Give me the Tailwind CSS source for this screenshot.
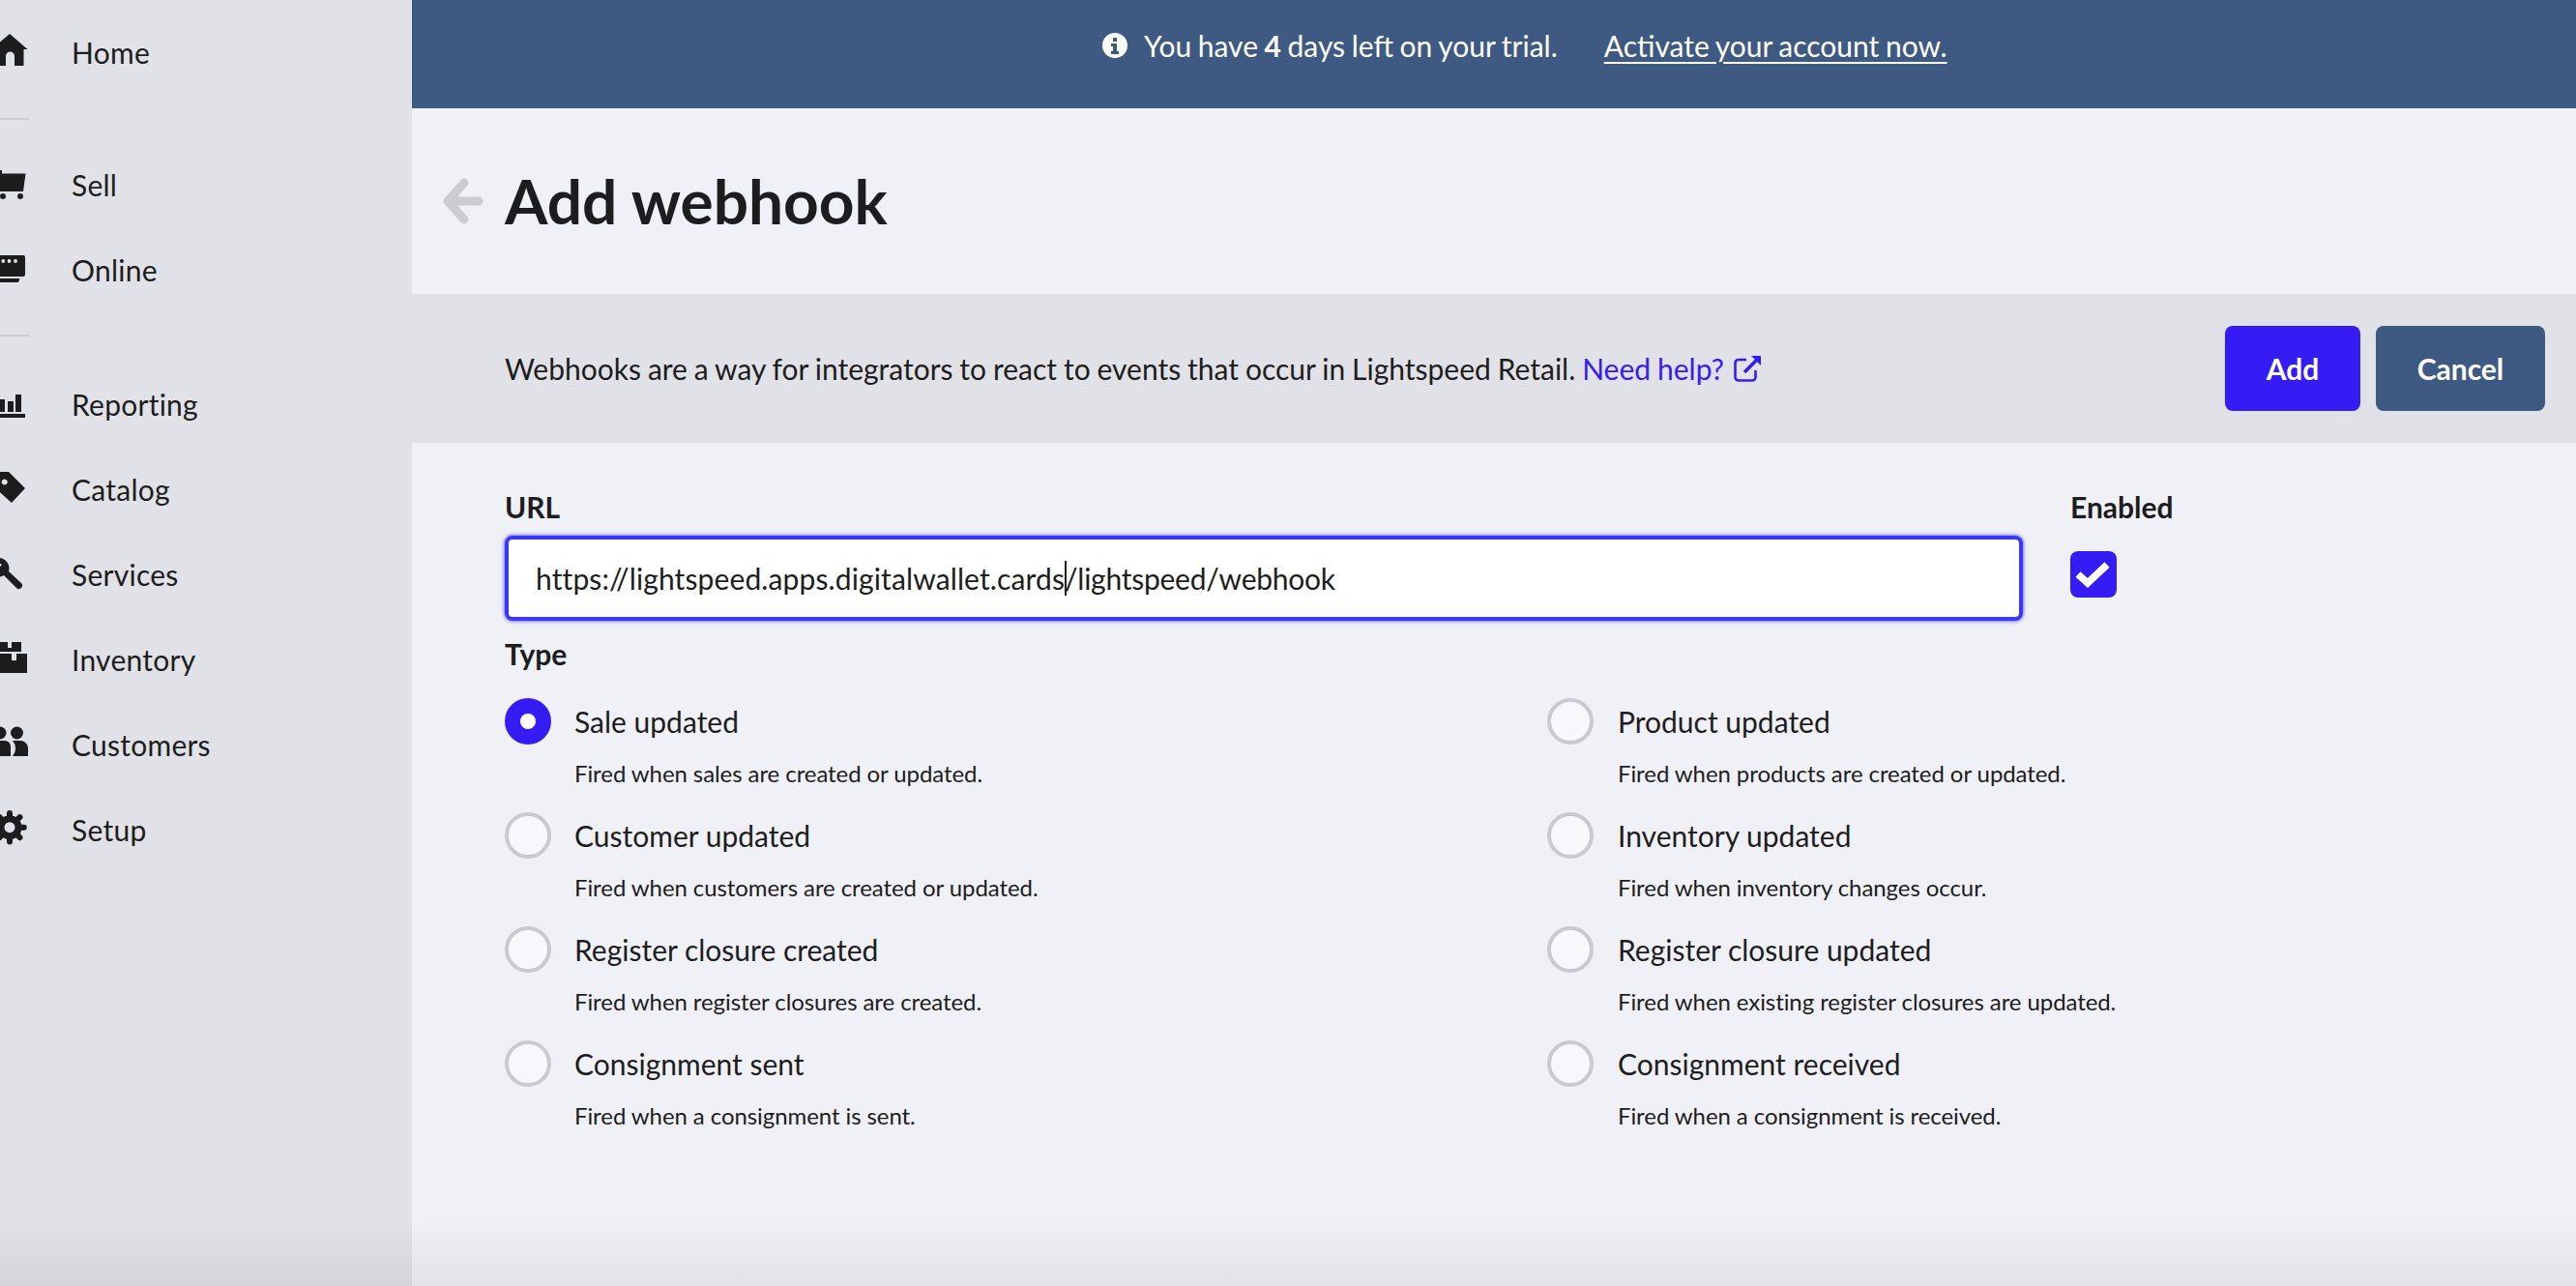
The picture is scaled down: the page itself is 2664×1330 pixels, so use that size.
<!DOCTYPE html>
<html lang="en">
<head>
    <meta charset="UTF-8">
    <meta name="viewport" content="width=device-width, initial-scale=1.0">
    <title>Add webhook</title>
    <script src="https://cdn.jsdelivr.net/npm/@tailwindcss/browser@4"></script>
</head>
<body class="bg-[#f0f1f7] font-['Lato',sans-serif] text-[#1d1d20]">
    <div class="relative flex h-[1330px] w-[2664px] overflow-hidden">

        <!-- sidebar, scrolled a little so the icons are cut at the left -->
        <nav class="w-[426px] shrink-0 bg-[#e1e2e7] pt-[10px] text-[30px] tracking-[0.25px]">
            <a class="flex h-[88px] items-center">
                <svg class="w-[30px] h-[40px] mr-[44px] shrink-0 fill-[#1d1d20]" viewBox="0 0 30 40"><path d="M10 1L28.500 17H24.500V34H15V24a4.500 4.500 0 0 0-9 0V34H-5V17H-9Z"/></svg>
                <span>Home</span>
            </a>
            <div class="mt-[24px] mb-[23px] h-[2px] w-[30px] bg-[#cbccd1]"></div>
            <a class="flex h-[88px] items-center">
                <svg class="w-[30px] h-[40px] mr-[44px] shrink-0 fill-[#1d1d20]" viewBox="0 0 30 40"><path d="M-2 5H2V8.500H26.500L24 27H-2Z"/><circle cx="3" cy="32" r="3"/><circle cx="21" cy="32" r="3"/></svg>
                <span>Sell</span>
            </a>
            <a class="flex h-[88px] items-center">
                <svg class="w-[30px] h-[40px] mr-[44px] shrink-0 fill-[#1d1d20]" viewBox="0 0 30 40"><path d="M-2 5H24a2 2 0 0 1 2 2V25a2 2 0 0 1-2 2H-2Z"/><path d="M-2 29H20.500L19 33H-2Z"/><g class="fill-[#e1e2e7]"><circle cx="3.300" cy="11" r="1.900"/><circle cx="9.500" cy="11" r="1.900"/><circle cx="16" cy="11" r="1.900"/></g></svg>
                <span>Online</span>
            </a>
            <div class="mt-[23px] mb-[26px] h-[2px] w-[30px] bg-[#cbccd1]"></div>
            <a class="flex h-[88px] items-center">
                <svg class="w-[30px] h-[40px] mr-[44px] shrink-0 fill-[#1d1d20]" viewBox="0 0 30 40"><path d="M-2 15H5V28H-2ZM8 17H14V28H8ZM16 10H22V28H16ZM-2 30H26V34H-2Z"/></svg>
                <span>Reporting</span>
            </a>
            <a class="flex h-[88px] items-center">
                <svg class="w-[30px] h-[40px] mr-[44px] shrink-0 fill-[#1d1d20]" viewBox="0 0 30 40"><path fill-rule="evenodd" d="M-8 2H9L26 19 12 34-8 16ZM4.700 9.500a3 3 0 1 0 .01 0Z"/></svg>
                <span>Catalog</span>
            </a>
            <a class="flex h-[88px] items-center">
                <svg class="w-[30px] h-[40px] mr-[44px] shrink-0 fill-[#1d1d20]" viewBox="0 0 30 40"><path d="M-1 3a11 11 0 0 1 10 14L22 29a3.500 3.500 0 0 1-5 5L4 21a11 11 0 0 1-12-1Z"/><path class="fill-[#e1e2e7]" d="M-6 7L2 9.500-2 15H-6Z"/></svg>
                <span>Services</span>
            </a>
            <a class="flex h-[88px] items-center">
                <svg class="w-[30px] h-[40px] mr-[44px] shrink-0 fill-[#1d1d20]" viewBox="0 0 30 40"><path d="M-2 2H8V8H12V2H22V12H-2ZM-2 14H12V21H17V14H28V34H-2Z"/></svg>
                <span>Inventory</span>
            </a>
            <a class="flex h-[88px] items-center">
                <svg class="w-[30px] h-[40px] mr-[44px] shrink-0 fill-[#1d1d20]" viewBox="0 0 30 40"><circle cx="0" cy="8" r="6.500"/><circle cx="17.500" cy="8" r="6.500"/><path d="M-6 16H5a6 6 0 0 1 6 6V32H-6Z"/><path d="M13 16H21a8 8 0 0 1 8 8V32H13a12 12 0 0 0 0-16Z"/></svg>
                <span>Customers</span>
            </a>
            <a class="flex h-[88px] items-center">
                <svg class="w-[30px] h-[40px] mr-[44px] shrink-0" viewBox="0 0 30 40"><g class="stroke-[#1d1d20]" stroke-width="6" stroke-linecap="round"><path d="M10 3V32.500M-4.800 17.700H24.800M-.5 7.200L20.500 28.200M20.500 7.200L-.5 28.200"/></g><circle class="fill-[#1d1d20]" cx="10" cy="17.700" r="12.500"/><circle class="fill-[#e1e2e7]" cx="10" cy="17.700" r="5.500"/></svg>
                <span>Setup</span>
            </a>
        </nav>

        <main class="min-w-0 flex-1">
            <!-- trial banner -->
            <div class="flex h-[112px] items-center bg-[#3f5a82] pb-[18px] pl-[714px] text-[30px] text-white [word-spacing:-1.1px]">
                <svg class="mr-[17px] h-[26px] w-[26px] shrink-0" viewBox="0 0 26 26"><circle cx="13" cy="13" r="13" fill="#fff"/><path d="M11 5h4v4h-4zM9 11h6v8h2v3H9v-3h2v-5H9z" fill="#3f5a82"/></svg>
                <span>You have <b class="font-bold">4</b> days left on your trial.</span>
                <a class="ml-[48px] underline decoration-2 underline-offset-[5px]">Activate your account now.</a>
            </div>

            <!-- title -->
            <div class="flex h-[192px] items-center pl-[32px]">
                <svg class="mr-[22px] h-[48px] w-[42px] shrink-0" viewBox="0 0 42 48" fill="none" stroke="#cbccd1" stroke-width="9" stroke-linecap="round" stroke-linejoin="round"><path d="M22 5L5 24l17 19M5 24H37"/></svg>
                <h1 class="text-[64px] font-bold leading-none">Add webhook</h1>
            </div>

            <!-- intro band -->
            <div class="flex h-[154px] items-center justify-between bg-[#e1e2e7] pl-[96px] pr-[32px] text-[30px]">
                <p class="flex items-center [word-spacing:-0.8px]">Webhooks are a way for integrators to react to events that occur in Lightspeed Retail.&nbsp;<a class="flex items-center text-[#351cf5]">Need help?
                    <svg class="ml-[9px] h-[30px] w-[30px]" viewBox="0 0 30 30" fill="none" stroke="#351cf5" stroke-width="2.600"><path d="M14 6H6a3.500 3.500 0 0 0-3.500 3.500V24A3.500 3.500 0 0 0 6 27.500H20a3.500 3.500 0 0 0 3.500-3.500V17"/><path d="M12 19L27 4" stroke-width="3.600"/><path d="M19 2H29V12Z" fill="#351cf5" stroke="none"/></svg></a></p>
                <div class="flex gap-[16px]">
                    <button class="h-[88px] w-[140px] rounded-[8px] bg-[#351cf5] font-bold text-white">Add</button>
                    <button class="h-[88px] w-[175px] rounded-[8px] bg-[#3f5a82] font-bold text-white">Cancel</button>
                </div>
            </div>

            <!-- form -->
            <form class="pl-[96px] pt-[48px]">
                <div class="flex">
                    <div class="w-[1570px]">
                        <label class="block text-[30px] font-bold leading-[36px]">URL</label>
                        <div class="mt-[12px] flex h-[88px] items-center rounded-[8px] border-[4px] border-[#3d36f2] bg-white pl-[28px] text-[30px] shadow-[0_0_4px_#3d36f2]">
                            <span class="tracking-[0.12px]">https://lightspeed.apps.digitalwallet.cards</span><span class="h-[36px] w-0 border-l-2 border-[#1d1d20] -mr-[2px]"></span><span class="tracking-[-0.25px]">/lightspeed/webhook</span>
                        </div>
                    </div>
                    <div class="ml-[49px]">
                        <label class="block text-[30px] font-bold leading-[36px]">Enabled</label>
                        <div class="mt-[28px] h-[48px] w-[48px] rounded-[8px] bg-[#351cf5]">
                            <svg class="h-[48px] w-[48px]" viewBox="0 0 48 48" fill="none" stroke="#fff" stroke-width="7.500"><path d="M8 24L18 33 38 14"/></svg>
                        </div>
                    </div>
                </div>

                <label class="mt-[16px] block text-[30px] font-bold leading-[36px]">Type</label>

                <div class="mt-[28px] grid w-[2040px] grid-cols-[1078px_1fr] gap-y-[25px]">
                    <div class="flex gap-[24px]">
                        <span class="flex h-[48px] w-[48px] shrink-0 items-center justify-center rounded-full bg-[#351cf5]"><span class="h-[16px] w-[16px] rounded-full bg-white"></span></span>
                        <div><div class="text-[30px] leading-[48px]">Sale updated</div><div class="mt-[15px] text-[24px] leading-[30px] tracking-[-0.08px]">Fired when sales are created or updated.</div></div>
                    </div>
                    <div class="flex gap-[25px]">
                        <span class="h-[48px] w-[48px] shrink-0 rounded-full border-[4px] border-[#c9cacf] bg-[#f7f8fb]"></span>
                        <div><div class="text-[30px] leading-[48px]">Product updated</div><div class="mt-[15px] text-[24px] leading-[30px] tracking-[-0.08px]">Fired when products are created or updated.</div></div>
                    </div>
                    <div class="flex gap-[24px]">
                        <span class="h-[48px] w-[48px] shrink-0 rounded-full border-[4px] border-[#c9cacf] bg-[#f7f8fb]"></span>
                        <div><div class="text-[30px] leading-[48px]">Customer updated</div><div class="mt-[15px] text-[24px] leading-[30px] tracking-[-0.08px]">Fired when customers are created or updated.</div></div>
                    </div>
                    <div class="flex gap-[25px]">
                        <span class="h-[48px] w-[48px] shrink-0 rounded-full border-[4px] border-[#c9cacf] bg-[#f7f8fb]"></span>
                        <div><div class="text-[30px] leading-[48px]">Inventory updated</div><div class="mt-[15px] text-[24px] leading-[30px] tracking-[-0.08px]">Fired when inventory changes occur.</div></div>
                    </div>
                    <div class="flex gap-[24px]">
                        <span class="h-[48px] w-[48px] shrink-0 rounded-full border-[4px] border-[#c9cacf] bg-[#f7f8fb]"></span>
                        <div><div class="text-[30px] leading-[48px]">Register closure created</div><div class="mt-[15px] text-[24px] leading-[30px] tracking-[-0.08px]">Fired when register closures are created.</div></div>
                    </div>
                    <div class="flex gap-[25px]">
                        <span class="h-[48px] w-[48px] shrink-0 rounded-full border-[4px] border-[#c9cacf] bg-[#f7f8fb]"></span>
                        <div><div class="text-[30px] leading-[48px]">Register closure updated</div><div class="mt-[15px] text-[24px] leading-[30px] tracking-[-0.08px]">Fired when existing register closures are updated.</div></div>
                    </div>
                    <div class="flex gap-[24px]">
                        <span class="h-[48px] w-[48px] shrink-0 rounded-full border-[4px] border-[#c9cacf] bg-[#f7f8fb]"></span>
                        <div><div class="text-[30px] leading-[48px]">Consignment sent</div><div class="mt-[15px] text-[24px] leading-[30px] tracking-[-0.08px]">Fired when a consignment is sent.</div></div>
                    </div>
                    <div class="flex gap-[25px]">
                        <span class="h-[48px] w-[48px] shrink-0 rounded-full border-[4px] border-[#c9cacf] bg-[#f7f8fb]"></span>
                        <div><div class="text-[30px] leading-[48px]">Consignment received</div><div class="mt-[15px] text-[24px] leading-[30px] tracking-[-0.08px]">Fired when a consignment is received.</div></div>
                    </div>
                </div>
            </form>
        </main>

        <!-- soft shadow along the bottom edge -->
        <div class="pointer-events-none absolute inset-x-0 bottom-0 h-[70px] bg-gradient-to-b from-transparent to-black/6"></div>
    </div>
</body>
</html>
